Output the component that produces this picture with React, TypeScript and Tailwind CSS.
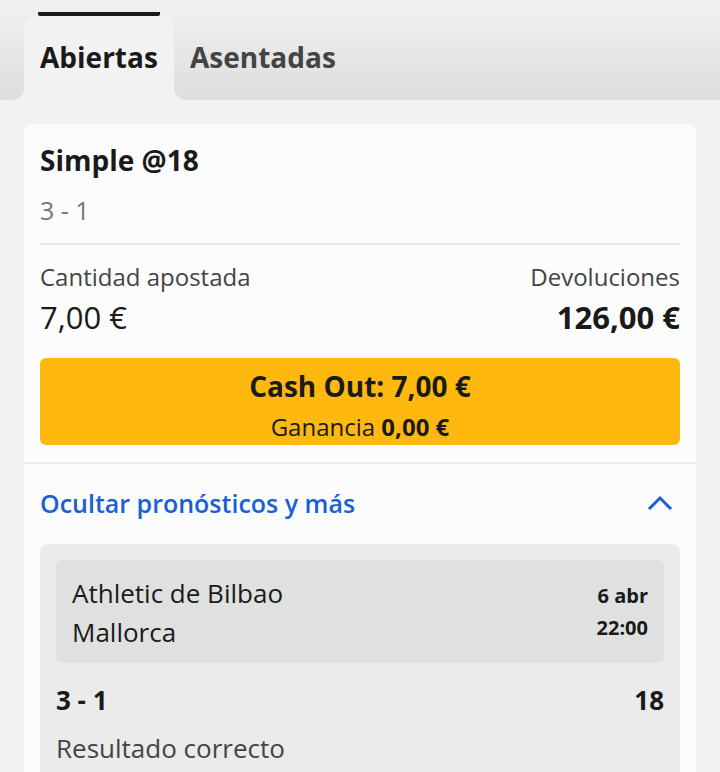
export default function App() {
  const font = { fontFamily: '"Open Sans", "Noto Sans", sans-serif' };

  return (
    <div className="min-h-screen w-[720px] bg-[#f2f2f2] text-[#1a1a1a]" style={font}>
      {/* tabs */}
      <div className="flex h-[100px]">
        <div className="w-[24px] h-full bg-gradient-to-b from-[#f1f1f1] to-[#dedede] rounded-br-[12px]"></div>
        <div className="w-[150px] h-full flex flex-col justify-end bg-gradient-to-b from-[#f1f1f1] to-[#dedede]">
          <div className="relative h-[84px] bg-[#f2f2f2] rounded-t-[12px] flex items-center pl-[16px] pb-[2px]">
            <div className="absolute top-[-4px] left-[14px] w-[122px] h-[4px] bg-[#1a1a1a] rounded-b-[2px]"></div>
            <span className="text-[28px] font-bold leading-none">Abiertas</span>
          </div>
        </div>
        <div className="flex-1 h-full bg-gradient-to-b from-[#f1f1f1] to-[#dedede] rounded-bl-[12px] flex items-center pl-[16px] pt-[14px]">
          <span className="text-[28px] font-bold leading-none text-[#444]">Asentadas</span>
        </div>
      </div>

      {/* bet card */}
      <div className="mx-[24px] mt-[24px] bg-[#fcfcfc] rounded-t-[8px]">
        <div className="px-[16px] pt-[16px] pb-[17px]">
          <div className="text-[28px] font-bold leading-[40px]">Simple @18</div>
          <div className="mt-[14px] text-[25px] leading-[32px] text-[#777]">3 - 1</div>
          <div className="mt-[17px] h-[2px] bg-[#e8e8e8]"></div>

          <div className="mt-[16px] flex justify-between">
            <div>
              <div className="text-[24px] leading-[32px] text-[#444]">Cantidad apostada</div>
              <div className="mt-[4px] text-[31px] leading-[40px]">7,00 €</div>
            </div>
            <div className="text-right">
              <div className="text-[24px] leading-[32px] text-[#444]">Devoluciones</div>
              <div className="mt-[4px] text-[31px] leading-[40px] font-bold">126,00 €</div>
            </div>
          </div>

          <div className="mt-[21px] h-[87px] bg-[#ffb80d] rounded-[6px] flex flex-col items-center pt-[10px]">
            <div className="text-[28px] font-bold leading-[36px]">Cash Out: 7,00 €</div>
            <div className="mt-[7px] text-[24px] leading-[32px]">
              Ganancia <span className="font-bold">0,00 €</span>
            </div>
          </div>
        </div>

        <div className="h-[2px] bg-[#ebebeb]"></div>

        <div className="px-[16px] pt-[23px]">
          <div className="flex items-center justify-between">
            <span className="text-[25px] font-semibold leading-[32px] text-[#1a5fd6]">
              Ocultar pronósticos y más
            </span>
            <svg width="26" height="18" viewBox="0 0 26 18" className="mr-[7px]">
              <polyline points="2,15 13,4 24,15" fill="none" stroke="#1a5fd6" strokeWidth="3" />
            </svg>
          </div>

          <div className="mt-[25px] bg-[#ebebeb] rounded-t-[8px] px-[16px] pt-[16px] pb-[8px]">
            <div className="bg-[#e0e0e0] rounded-[6px] pl-[16px] pr-[16px] pt-[17px] pb-[15px] flex justify-between">
              <div>
                <div className="text-[26px] leading-[32px]">Athletic de Bilbao</div>
                <div className="mt-[7px] text-[26px] leading-[32px]">Mallorca</div>
              </div>
              <div className="text-right pt-[6px]">
                <div className="text-[20px] font-bold leading-[26px]">6 abr</div>
                <div className="mt-[6px] text-[20px] font-bold leading-[26px]">22:00</div>
              </div>
            </div>
            <div className="mt-[21px] flex justify-between text-[26px] font-bold leading-[32px]">
              <span>3 - 1</span>
              <span>18</span>
            </div>
            <div className="mt-[16px] text-[26px] leading-[32px] text-[#444]">Resultado correcto</div>
          </div>
        </div>
      </div>
    </div>
  );
}
